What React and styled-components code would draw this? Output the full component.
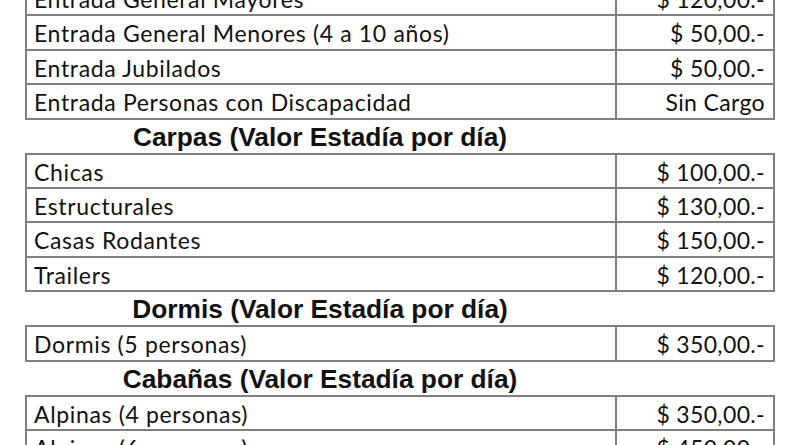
import React from "react";
import styled, { createGlobalStyle } from "styled-components";

const Global = createGlobalStyle`
  html, body { margin: 0; padding: 0; background: #ffffff; }
  body { overflow: hidden; }
`;

const Page = styled.div`
  width: 800px;
  height: 445px;
  overflow: hidden;
  background: #fff;
  color: #111;
`;

const Sheet = styled.div`
  display: flex;
  flex-direction: column;
  margin-top: -20px;
`;

const Table = styled.div`
  margin-left: 25px;
  width: 750px;
  display: grid;
  grid-template-columns: 590px 158px;
  border-top: 2px solid #808080;
  border-left: 2px solid #808080;
  box-sizing: border-box;
`;

const Cell = styled.div`
  line-height: 32.4px;
  border-right: 2px solid #808080;
  border-bottom: 2px solid #808080;
  font-family: Lato, "Liberation Sans", sans-serif;
  font-size: 23px;
  letter-spacing: ${(p) => (p.$right ? "0.35px" : "0.65px")};
  padding: ${(p) => (p.$right ? "1px 8px 0 0" : "1px 0 0 7px")};
  box-sizing: border-box;
  height: 34.4px;
  white-space: nowrap;
  text-align: ${(p) => (p.$right ? "right" : "left")};
`;

const Heading = styled.div`
  width: 640px;
  height: 33px;
  line-height: 33px;
  padding-top: 1px;
  box-sizing: border-box;
  text-align: center;
  font-family: "Liberation Sans", Arial, sans-serif;
  font-weight: 700;
  font-size: 26.3px;
  color: #111;
  white-space: nowrap;
`;

const sections = [
  {
    title: null,
    rows: [
      ["Entrada General Mayores", "$ 120,00.-"],
      ["Entrada General Menores (4 a 10 años)", "$ 50,00.-"],
      ["Entrada Jubilados", "$ 50,00.-"],
      ["Entrada Personas con Discapacidad", "Sin Cargo"],
    ],
  },
  {
    title: "Carpas (Valor Estadía por día)",
    rows: [
      ["Chicas", "$ 100,00.-"],
      ["Estructurales", "$ 130,00.-"],
      ["Casas Rodantes", "$ 150,00.-"],
      ["Trailers", "$ 120,00.-"],
    ],
  },
  {
    title: "Dormis (Valor Estadía por día)",
    rows: [["Dormis (5 personas)", "$ 350,00.-"]],
  },
  {
    title: "Cabañas (Valor Estadía por día)",
    rows: [
      ["Alpinas (4 personas)", "$ 350,00.-"],
      ["Alpinas (6 personas)", "$ 450,00.-"],
    ],
  },
];

export default function App() {
  return (
    <Page>
      <Global />
      <Sheet>
        {sections.map((s, i) => (
          <React.Fragment key={i}>
            {s.title && <Heading>{s.title}</Heading>}
            <Table>
              {s.rows.map(([a, b], j) => (
                <React.Fragment key={j}>
                  <Cell>{a}</Cell>
                  <Cell $right>{b}</Cell>
                </React.Fragment>
              ))}
            </Table>
          </React.Fragment>
        ))}
      </Sheet>
    </Page>
  );
}
